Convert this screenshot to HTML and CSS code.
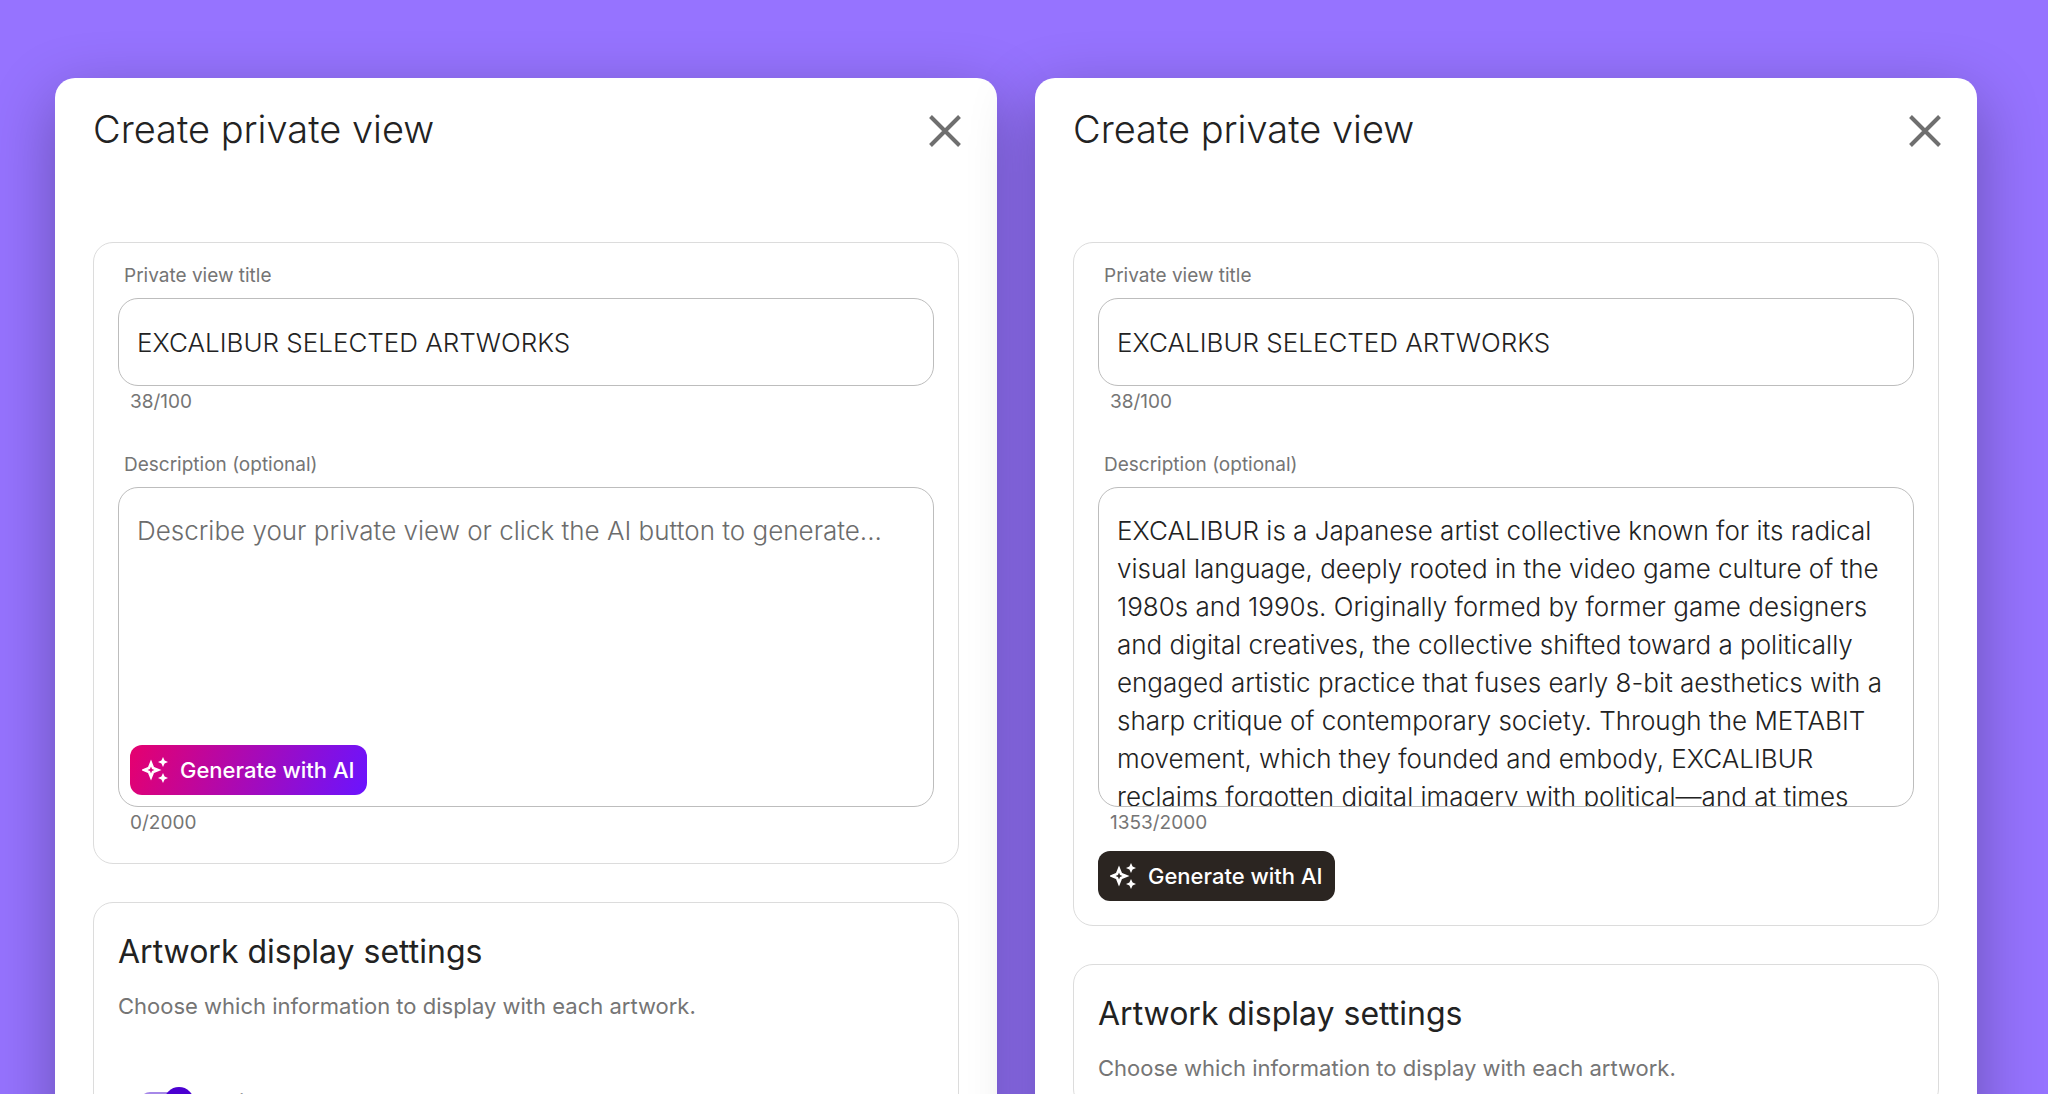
FILE: index.html
```html
<!DOCTYPE html>
<html lang="en">
<head>
  <meta charset="UTF-8">
  <meta name="viewport" content="width=device-width, initial-scale=1.0">
  <link rel="stylesheet" href="styles.css">
  <title>Create private view</title>
</head>
<body>
  <svg class="sprite" aria-hidden="true">
    <symbol id="icon-close" viewBox="0 0 32 32">
      <path d="M1.5 1.5 30.500 30.500M30.500 1.500 1.500 30.500" fill="none" stroke="currentColor" stroke-width="4"/>
    </symbol>
    <symbol id="icon-sparkles" viewBox="0 0 26 26">
      <path d="M9 6 11 11 16 13 11 15 9 20 7 15 2 13 7 11Z" fill="none" stroke="currentColor" stroke-width="2.600"/>
      <path d="M21 0 22.600 3.400 26 5 22.600 6.600 21 10 19.400 6.600 16 5 19.400 3.400ZM21 16 22.600 19.400 26 21 22.600 22.600 21 26 19.400 22.600 16 21 19.400 19.400Z" fill="currentColor"/>
    </symbol>
  </svg>

  <main class="views">
    <form class="view">
      <header class="view_header">
        <h1 class="view_title">Create private view</h1>
        <button class="close" type="button" aria-label="Close"><svg class="close_icon"><use href="#icon-close"/></svg></button>
      </header>

      <section class="box">
        <div class="field">
          <label class="label" for="title-1">Private view title</label>
          <input class="control" id="title-1" type="text" value="EXCALIBUR SELECTED ARTWORKS">
          <span class="counter">38/100</span>
        </div>
        <div class="field">
          <label class="label" for="description-1">Description (optional)</label>
          <div class="area">
            <textarea class="control control_area" id="description-1" placeholder="Describe your private view or click the AI button to generate..."></textarea>
            <button class="generate generate_inside" type="button"><svg class="generate_icon"><use href="#icon-sparkles"/></svg>Generate with AI</button>
          </div>
          <span class="counter">0/2000</span>
        </div>
      </section>

      <section class="box">
        <h2 class="box_title">Artwork display settings</h2>
        <p class="box_text">Choose which information to display with each artwork.</p>
        <label class="switch"><input class="switch_input" type="checkbox" checked>Artist name</label>
      </section>
    </form>

    <form class="view">
      <header class="view_header">
        <h1 class="view_title">Create private view</h1>
        <button class="close" type="button" aria-label="Close"><svg class="close_icon"><use href="#icon-close"/></svg></button>
      </header>

      <section class="box">
        <div class="field">
          <label class="label" for="title-2">Private view title</label>
          <input class="control" id="title-2" type="text" value="EXCALIBUR SELECTED ARTWORKS">
          <span class="counter">38/100</span>
        </div>
        <div class="field">
          <label class="label" for="description-2">Description (optional)</label>
          <div class="area">
            <textarea class="control control_area" id="description-2">EXCALIBUR is a Japanese artist collective known for its radical visual language, deeply rooted in the video game culture of the 1980s and 1990s. Originally formed by former game designers and digital creatives, the collective shifted toward a politically engaged artistic practice that fuses early 8-bit aesthetics with a sharp critique of contemporary society. Through the METABIT movement, which they founded and embody, EXCALIBUR reclaims forgotten digital imagery with political—and at times</textarea>
          </div>
          <span class="counter">1353/2000</span>
        </div>
        <button class="generate generate_dark" type="button"><svg class="generate_icon"><use href="#icon-sparkles"/></svg>Generate with AI</button>
      </section>

      <section class="box">
        <h2 class="box_title">Artwork display settings</h2>
        <p class="box_text">Choose which information to display with each artwork.</p>
      </section>
    </form>
  </main>
</body>
</html>
```
FILE: styles.css
```css
* {
  box-sizing: border-box;
}

body {
  margin: 0;
  height: 100vh;
  overflow: hidden;
  background: #9673ff;
  color: #222;
  font-family: Inter, "Liberation Sans", sans-serif;
}

button,
input,
textarea {
  font-family: inherit;
}

.sprite {
  display: none;
}

.views {
  display: grid;
  grid-template-columns: 1fr 1fr;
  align-items: start;
  gap: 38px;
  padding: 78px 71px 0 55px;
}

.view {
  min-height: 100vh;
  padding: 28px 38px 38px;
  border-radius: 20px;
  background: #fff;
  box-shadow: 0 20px 64px rgba(0, 0, 0, 0.3);
}

.view_header {
  display: flex;
  align-items: flex-start;
  justify-content: space-between;
  margin-bottom: 90px;
}

.view_title {
  margin: 0;
  font-size: 38px;
  font-weight: 300;
  line-height: 46px;
}

.close {
  display: flex;
  padding: 9px 0 0;
  margin-right: -2px;
  border: 0;
  background: none;
  color: #6f6f6f;
  cursor: pointer;
}

.close_icon {
  width: 32px;
  height: 32px;
}

.box {
  padding: 19px 24px 24px;
  border: 1px solid #dcdcdc;
  border-radius: 20px;
}

.box + .box {
  margin-top: 38px;
}

.field {
  display: flex;
  flex-direction: column;
}

.field + .field {
  margin-top: 33px;
}

.label {
  padding-left: 6px;
  margin-bottom: 8px;
  color: #757575;
  font-size: 19px;
  line-height: 28px;
}

.control {
  display: block;
  width: 100%;
  height: 88px;
  padding: 0 18px;
  border: 1px solid #bdbdbd;
  border-radius: 20px;
  outline: 0;
  background: #fff;
  color: #222;
  font-size: 26px;
  font-weight: 300;
  line-height: 38px;
}

.control::placeholder {
  color: #6c6c6c;
}

.control_area {
  height: 320px;
  padding: 24px 18px 0;
  overflow: hidden;
  resize: none;
}

.area {
  position: relative;
}

.counter {
  padding-left: 12px;
  color: #757575;
  font-size: 19px;
  line-height: 32px;
}

.generate {
  display: flex;
  align-items: center;
  gap: 12px;
  height: 50px;
  padding: 0 13px 0 12px;
  border: 0;
  border-radius: 12px;
  background: linear-gradient(110deg, #e6006e, #6a14ff);
  color: #fff;
  font-size: 22px;
  font-weight: 500;
  cursor: pointer;
}

.generate_inside {
  position: absolute;
  bottom: 12px;
  left: 12px;
}

.generate_dark {
  margin-top: 12px;
  background: #2b2521;
}

.generate_icon {
  width: 26px;
  height: 26px;
}

.box_title {
  margin: 8px 0 16px;
  font-size: 32px;
  font-weight: 400;
  line-height: 44px;
}

.box_text {
  margin: 0;
  color: #757575;
  font-size: 22px;
  line-height: 32px;
}

.switch {
  display: flex;
  align-items: center;
  gap: 14px;
  padding: 64px 0 0 22px;
  font-size: 22px;
  line-height: 32px;
}

.switch_input {
  position: relative;
  appearance: none;
  width: 54px;
  height: 20px;
  margin: 0;
  border-radius: 10px;
  background: #a688e8;
}

.switch_input::after {
  content: "";
  position: absolute;
  top: -5px;
  right: 0;
  width: 30px;
  height: 30px;
  border-radius: 50%;
  background: #4b00d1;
}
```
